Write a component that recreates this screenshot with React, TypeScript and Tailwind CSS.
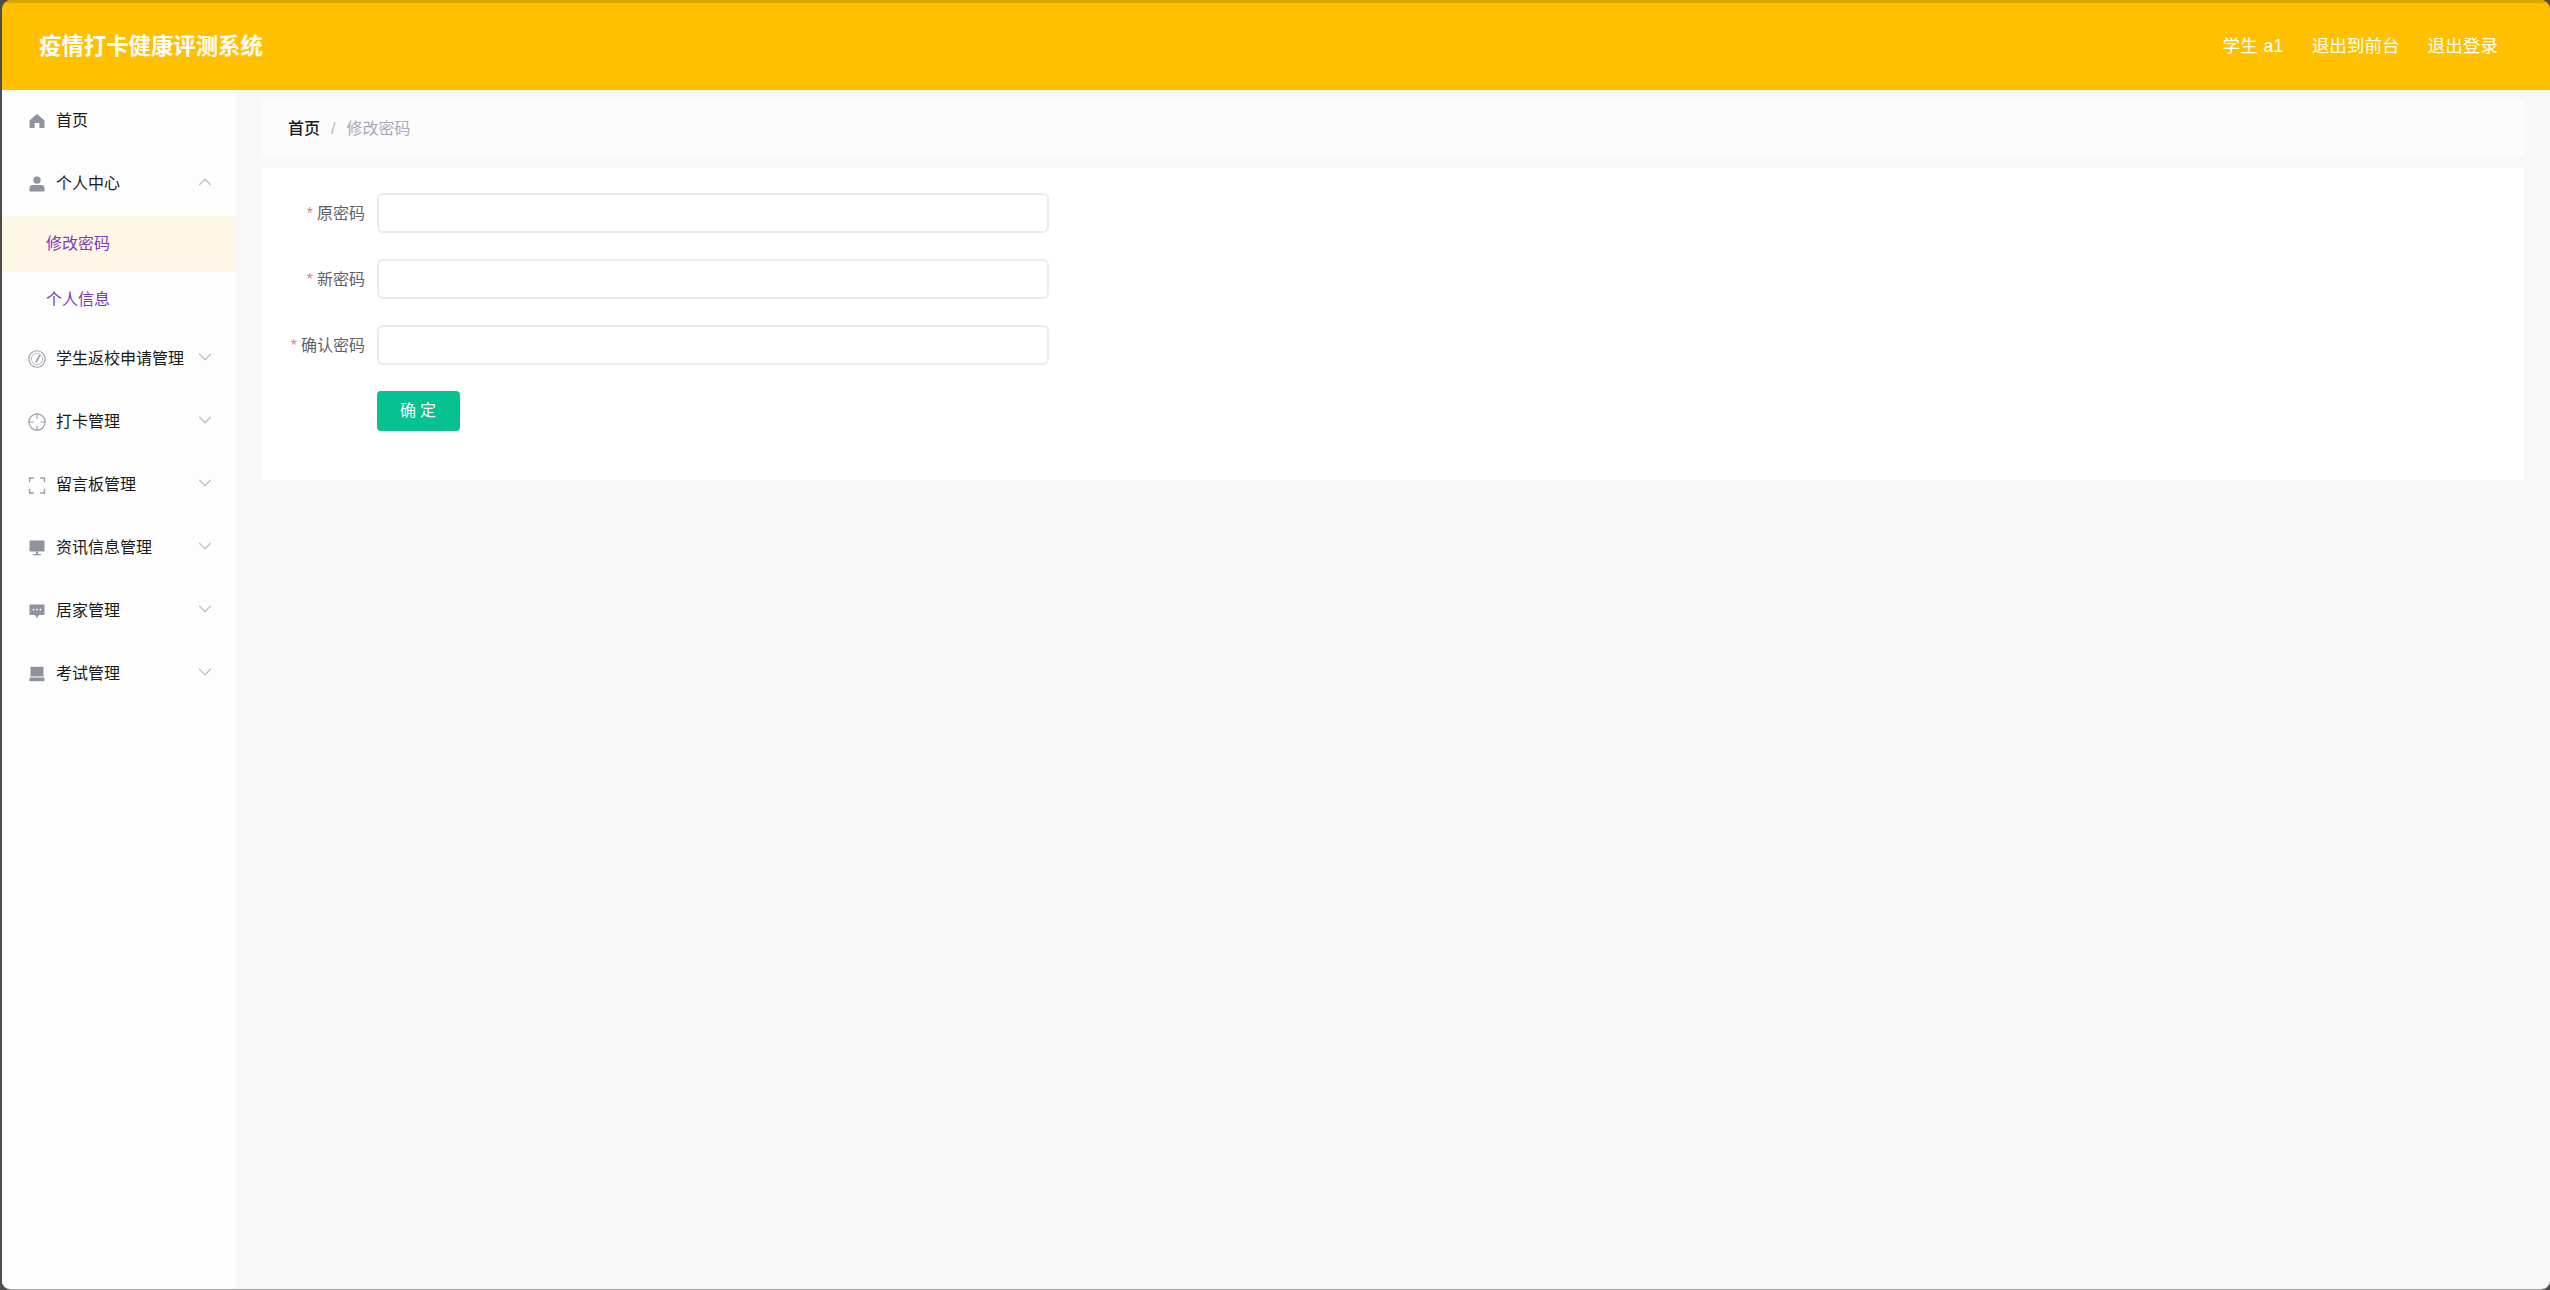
import type { ReactNode } from "react";
import { ChevronDown, ChevronUp } from "lucide-react";

const FONT = "font-['Liberation_Sans','Noto_Sans_CJK_SC',sans-serif]";

const HomeIcon = () => (
  <svg viewBox="0 0 16 16" className="w-[16px] h-[16px] fill-[#8f92a1]">
    <path d="M8 1 L15.5 7.6 L15.5 15 L10.4 15 L10.4 10 L5.6 10 L5.6 15 L0.5 15 L0.5 7.6 Z" />
  </svg>
);

const UserIcon = () => (
  <svg viewBox="0 0 16 16" className="w-[16px] h-[16px] fill-[#8f92a1]">
    <circle cx="8" cy="4.2" r="3.6" />
    <path d="M0.5 12 Q0.5 9 4 9 L12 9 Q15.5 9 15.5 12 L15.5 15.5 L0.5 15.5 Z" />
  </svg>
);

const GaugeIcon = () => (
  <svg viewBox="0 0 16 16" className="w-[18px] h-[18px] fill-none stroke-[#9a9caa]" strokeWidth="1">
    <circle cx="8" cy="8" r="7.3" />
    <circle cx="8" cy="8" r="5" strokeWidth="0.6" />
    <path d="M7 11 L10.6 4.6" strokeWidth="1.5" />
  </svg>
);

const AimIcon = () => (
  <svg viewBox="0 0 16 16" className="w-[18px] h-[18px] fill-none stroke-[#9a9caa]" strokeWidth="1">
    <circle cx="8" cy="8" r="7.2" />
    <path d="M8 0.5 V5 M8 11 V15.5 M0.5 8 H5 M11 8 H15.5" />
  </svg>
);

const FullIcon = () => (
  <svg viewBox="0 0 16 16" className="w-[18px] h-[17px] fill-none stroke-[#9a9caa]" strokeWidth="1.3">
    <path d="M1 5 V1 H5 M11 1 H15 V5 M15 11 V15 H11 M5 15 H1 V11" />
  </svg>
);

const ScreenIcon = () => (
  <svg viewBox="0 0 16 16" className="w-[16px] h-[16px] fill-[#8f92a1]">
    <rect x="0.5" y="0.5" width="15" height="11" rx="0.6" />
    <rect x="7" y="11.5" width="2" height="2.4" />
    <rect x="4" y="14" width="8" height="1.2" />
  </svg>
);

const CommentIcon = () => (
  <svg viewBox="0 0 16 16" className="w-[16px] h-[16px]">
    <path className="fill-[#8f92a1]" d="M0.5 1.5 H15.5 V12 H10 L8 15 L6 12 H0.5 Z" />
    <rect x="3.8" y="5.8" width="1.6" height="1.6" className="fill-white" />
    <rect x="7.2" y="5.8" width="1.6" height="1.6" className="fill-white" />
    <rect x="10.6" y="5.8" width="1.6" height="1.6" className="fill-white" />
  </svg>
);

const OrderIcon = () => (
  <svg viewBox="0 0 16 16" className="w-[16px] h-[16px] fill-[#8f92a1]">
    <path d="M1.5 0.8 H14.5 V10.5 H1.5 Z" />
    <path d="M0.5 11.5 H15.5 V15.2 H0.5 Z" />
  </svg>
);

interface MenuItem {
  label: string;
  icon: ReactNode;
  open?: boolean;
  arrow?: boolean;
}

const TOP: MenuItem[] = [
  { label: "首页", icon: <HomeIcon /> },
  { label: "个人中心", icon: <UserIcon />, arrow: true, open: true },
];

const REST: MenuItem[] = [
  { label: "学生返校申请管理", icon: <GaugeIcon />, arrow: true },
  { label: "打卡管理", icon: <AimIcon />, arrow: true },
  { label: "留言板管理", icon: <FullIcon />, arrow: true },
  { label: "资讯信息管理", icon: <ScreenIcon />, arrow: true },
  { label: "居家管理", icon: <CommentIcon />, arrow: true },
  { label: "考试管理", icon: <OrderIcon />, arrow: true },
];

function MenuRow({ item }: { item: MenuItem }) {
  return (
    <div className="relative h-[63px] pb-[1px] flex items-center pl-[26px] text-[16px] text-[#1a1a1a]">
      <span className="w-[18px] flex justify-center mr-[10px] shrink-0">{item.icon}</span>
      <span>{item.label}</span>
      {item.arrow && (
        <span className="absolute right-[20px] top-[18px] text-[#bcbec8]">
          {item.open ? <ChevronUp size={22} strokeWidth={1.3} /> : <ChevronDown size={22} strokeWidth={1.3} />}
        </span>
      )}
    </div>
  );
}

const FIELDS = ["原密码", "新密码", "确认密码"];

export default function App() {
  return (
    <div className={`h-screen bg-[#4d4d4d] ${FONT}`}>
      <div className="h-full flex flex-col overflow-hidden rounded-[9px] ml-[2px] mb-[2px] border-b border-[#a8a8a8]">
        {/* Header */}
        <header className="h-[90px] shrink-0 bg-[#ffc000] border-t-[3px] border-[#dba600] flex items-center justify-between pl-[37px] pr-[52px] text-white">
          <h1 className="text-[22.4px] font-bold">疫情打卡健康评测系统</h1>
          <div className="flex items-center text-[17.6px] gap-[28px]">
            <span className="tracking-[0.3px]">学生 a1</span>
            <span>退出到前台</span>
            <span>退出登录</span>
          </div>
        </header>

        <div className="flex-1 flex min-h-0 bg-[#f8f8f8]">
          {/* Sidebar */}
          <aside className="w-[234px] shrink-0 bg-[#fdfdfd]">
            {TOP.map((item) => (
              <MenuRow key={item.label} item={item} />
            ))}
            <div className="h-[56px] flex items-center pl-[44px] text-[16px] text-[#7e37c0] bg-[#fff7e6]">
              修改密码
            </div>
            <div className="h-[56px] flex items-center pl-[44px] text-[16px] text-[#7e37c0]">个人信息</div>
            {REST.map((item) => (
              <MenuRow key={item.label} item={item} />
            ))}
          </aside>

          {/* Main */}
          <main className="flex-1 min-w-0 pt-[10px] pl-[26px] pr-[26px]">
            <div className="h-[56px] bg-[#fcfcfc] flex items-center pl-[26px] pt-[2px] text-[16px]">
              <span className="text-[#1a1a1a] font-medium">首页</span>
              <span className="text-[#b8b8c0] mx-[11px]">/</span>
              <span className="text-[#a6a9bb]">修改密码</span>
            </div>

            <div className="mt-[12px] h-[312px] bg-white pt-[25px]">
              <div className="flex flex-col gap-[26px]">
                {FIELDS.map((label) => (
                  <div key={label} className="flex items-center h-[40px]">
                    <label className="w-[103px] text-right text-[16px] text-[#606266] mr-[12px] shrink-0 pt-[1px]">
                      <span className="text-[#f07c86] mr-[4px]">*</span>
                      {label}
                    </label>
                    <input
                      type="password"
                      className="w-[672px] h-[40px] bg-white border-2 border-[#ebebeb] rounded-[6px] outline-none"
                    />
                  </div>
                ))}
              </div>
              <button className="mt-[26px] ml-[115px] w-[83px] h-[40px] pl-[3px] bg-[#05c290] rounded-[4px] text-white text-[16px] tracking-[4px]">
                确定
              </button>
            </div>
          </main>
        </div>
      </div>
    </div>
  );
}
